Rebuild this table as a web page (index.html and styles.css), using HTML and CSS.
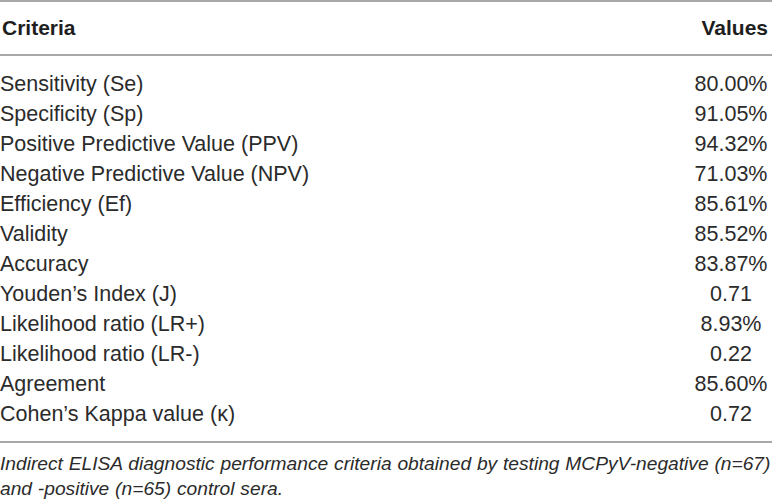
FILE: index.html
```html
<!DOCTYPE html>
<html>
<head>
<meta charset="utf-8">
<link rel="stylesheet" href="styles.css">
</head>
<body>
<div class="wrap">
  <table class="tbl">
    <thead>
      <tr><th class="crit">Criteria</th><th class="val">Values</th></tr>
    </thead>
    <tbody>
      <tr class="first"><td class="crit">Sensitivity (Se)</td><td class="val">80.00%</td></tr>
      <tr><td class="crit">Specificity (Sp)</td><td class="val">91.05%</td></tr>
      <tr><td class="crit">Positive Predictive Value (PPV)</td><td class="val">94.32%</td></tr>
      <tr><td class="crit">Negative Predictive Value (NPV)</td><td class="val">71.03%</td></tr>
      <tr><td class="crit">Efficiency (Ef)</td><td class="val">85.61%</td></tr>
      <tr><td class="crit">Validity</td><td class="val">85.52%</td></tr>
      <tr><td class="crit">Accuracy</td><td class="val">83.87%</td></tr>
      <tr><td class="crit">Youden’s Index (J)</td><td class="val">0.71</td></tr>
      <tr><td class="crit">Likelihood ratio (LR+)</td><td class="val">8.93%</td></tr>
      <tr><td class="crit">Likelihood ratio (LR-)</td><td class="val">0.22</td></tr>
      <tr><td class="crit">Agreement</td><td class="val">85.60%</td></tr>
      <tr class="last"><td class="crit">Cohen’s Kappa value (κ)</td><td class="val">0.72</td></tr>
    </tbody>
  </table>
  <p class="caption">Indirect ELISA diagnostic performance criteria obtained by testing MCPyV-negative (n=67) and -positive (n=65) control sera.</p>
</div>
</body>
</html>
```
FILE: styles.css
```css
html, body {
  margin: 0;
  padding: 0;
  background: #ffffff;
}
body {
  font-family: "Liberation Sans", Arial, sans-serif;
  color: #2b2b2b;
}
.wrap {
  width: 772px;
}
.tbl {
  width: 100%;
  border-collapse: collapse;
  border-top: 2px solid #a8a8a8;
  border-bottom: 2px solid #a8a8a8;
}
.tbl th {
  font-size: 21px;
  font-weight: bold;
  color: #1e1e1e;
  line-height: 30px;
  padding: 11px 0 11px 2px;
  border-bottom: 2px solid #a8a8a8;
}
.tbl td {
  font-size: 21.5px;
  line-height: 30px;
  padding: 0;
}
.tbl tr.first td {
  padding-top: 13px;
}
.tbl tr.last td {
  padding-bottom: 12px;
}
.crit {
  text-align: left;
}
.val {
  text-align: center;
  width: 76px;
}
.tbl th.val {
  text-align: right;
  padding-right: 4px;
}
.caption {
  margin: 0;
  padding-top: 8px;
  font-style: italic;
  font-size: 19.2px;
  word-spacing: 0.5px;
  line-height: 25px;
  color: #2b2b2b;
}
```
